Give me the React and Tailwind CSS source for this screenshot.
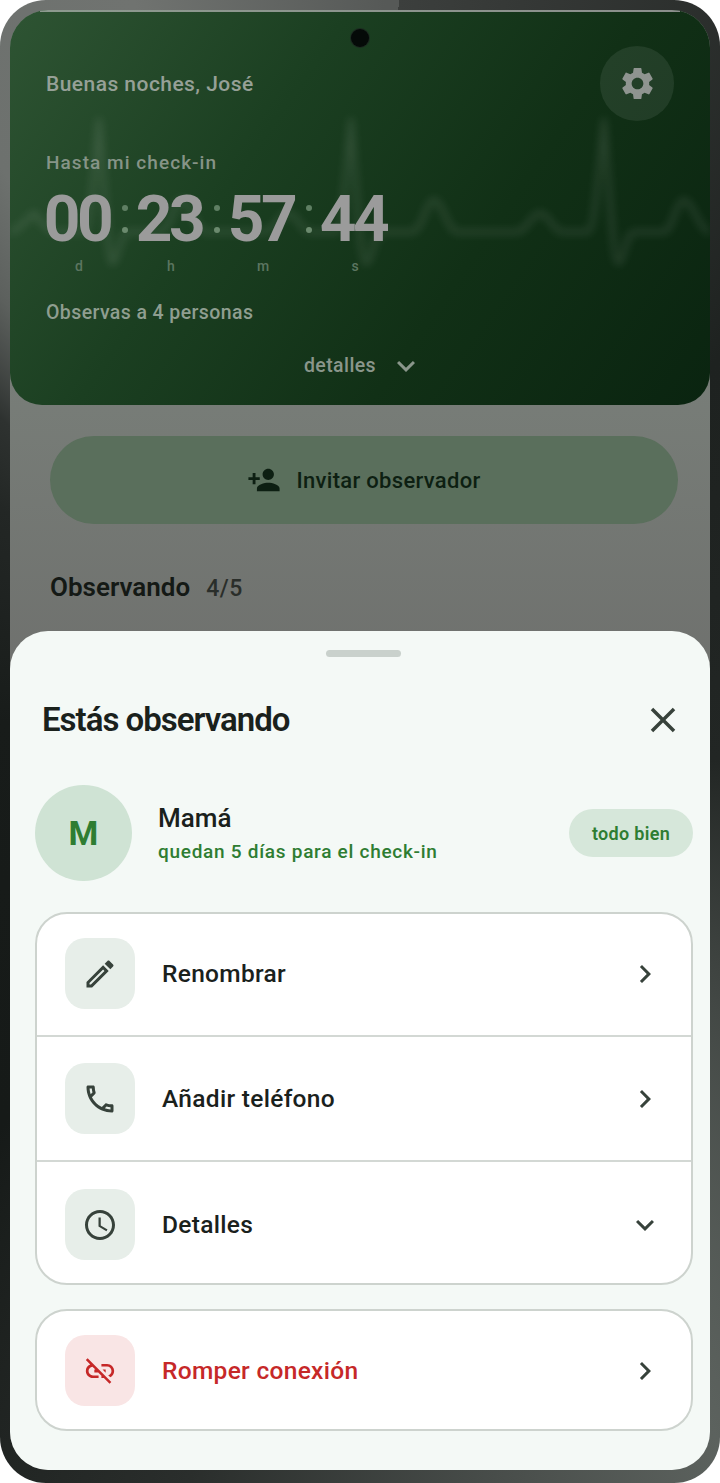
import React from "react";
import {
  MdSettings, MdPersonAdd, MdClose, MdOutlineEdit, MdOutlineCall, MdOutlineAccessTime,
  MdLinkOff, MdChevronRight, MdExpandMore,
} from "react-icons/md";

const ecg = "M10 232 C16 232 24 222 34 213 C42 222 48 232 56 232 L84 232 C90 232 94 170 99 120 C104 180 108 263 112 263 C118 263 120 232 128 232 L160 232 C170 232 174 200 182 200 C190 200 196 232 205 232 L265 232 C274 232 280 213 288 213 C296 213 302 232 310 232 L336 232 C342 232 346 170 351 120 C356 180 360 263 366 263 C372 263 374 232 382 232 L412 232 C422 232 426 200 434 200 C442 200 448 232 457 232 L517 232 C526 232 532 213 540 213 C548 213 554 232 562 232 L588 232 C594 232 599 170 604 120 C609 180 613 263 618 263 C624 263 626 232 634 232 L664 232 C672 232 676 200 684 200 C692 200 700 232 710 232";

function Unit({ value, label }) {
  return (
    <div className="flex w-[74px] flex-col items-center">
      <div className="pr-[4px] text-[64px] leading-[60px] font-bold tracking-[-3.5px] text-[#9b9b9b]">{value}</div>
      <div className="mt-[7px] text-[14px] leading-[18px] font-medium text-[#5c7560]">{label}</div>
    </div>
  );
}

function Dots() {
  return (
    <div className="flex h-[60px] w-[18px] flex-col items-center gap-[16px] pt-[15px]">
      <span className="h-[6px] w-[6px] rounded-full bg-[#5f7f63]" />
      <span className="h-[6px] w-[6px] rounded-full bg-[#6b8a6e]" />
    </div>
  );
}

function Row({ icon, label, end, tile = "bg-[#e7eee9] text-[#37423b]", text = "text-[#1a211c]", className = "" }) {
  return (
    <div className={`flex items-center pl-[28px] pr-[28px] ${className}`}>
      <div className={`flex h-[71px] w-[70px] shrink-0 items-center justify-center rounded-[20px] ${tile}`}>{icon}</div>
      <div className={`ml-[27px] flex-1 text-[24.5px] leading-[30px] font-medium tracking-[0.3px] ${text}`}>{label}</div>
      {end}
    </div>
  );
}

export default function App() {
  const chevron = <MdChevronRight className="text-[#37423b]" size={36} />;
  return (
    <div className="h-[1483px] w-[720px] bg-white font-['Roboto',sans-serif]">
      <div className="h-full w-full rounded-[46px] bg-[conic-gradient(from_3deg,#3c3f3d_0deg,#363937_8deg,#1e2220_40deg,#222624_90deg,#5c625e_150deg,#4a4f4c_165deg,#2a2e2c_190deg,#161a18_220deg,#181c1a_270deg,#232725_300deg,#2e3230_309deg,#5c605d_318deg,#6d716e_325deg,#707370_340deg,#565957_359deg)] px-[10px] pt-[10px] pb-[13px]">
        <div className="relative h-full w-full overflow-hidden rounded-[38px] bg-[linear-gradient(180deg,#838d85_0%,#6f716e_45%,#6b6e6b_100%)]">
          <div className="relative h-[395px] overflow-hidden rounded-b-[32px] bg-[linear-gradient(125deg,#2e5433_0%,#1b3f21_35%,#113016_65%,#0a2410_100%)] pt-[61px] pl-[36px]">
            <svg className="absolute top-[-10px] left-[-10px] blur-[4px]" width="720" height="395" viewBox="0 0 720 395">
              <path d={ecg} fill="none" stroke="#ffffff" strokeOpacity="0.11" strokeWidth="5" strokeLinejoin="round" />
            </svg>
            <div className="absolute top-[19px] left-[341px] h-[18px] w-[18px] rounded-full bg-[#050a08] ring-1 ring-[#1c2a20]" />
            <div className="absolute top-[36px] right-[36px] flex h-[75px] w-[74px] items-center justify-center rounded-full bg-[#ffffff14] text-[#8f9490]">
              <MdSettings size={39} />
            </div>
            <div className="relative text-[21px] leading-[26px] font-medium tracking-[0.45px] text-[#96a097]">Buenas noches, José</div>
            <div className="relative mt-[54px] text-[19px] leading-[24px] font-medium tracking-[1.05px] text-[#869487]">Hasta mi check-in</div>
            <div className="relative mt-[15px] -ml-[4px] flex">
              <Unit value="00" label="d" />
              <Dots />
              <Unit value="23" label="h" />
              <Dots />
              <Unit value="57" label="m" />
              <Dots />
              <Unit value="44" label="s" />
            </div>
            <div className="relative mt-[25px] text-[19.5px] leading-[26px] font-medium tracking-[0.4px] text-[#8f9e90]">Observas a 4 personas</div>
            <div className="relative mt-[27px] -ml-[36px] flex h-[26px] items-center justify-center gap-[12px] pl-[8px] text-[19.5px] leading-[26px] font-medium tracking-[0.4px] text-[#8a968b]">
              <span>detalles</span>
              <MdExpandMore size={36} />
            </div>
          </div>

          <div className="mt-[31px] mr-[32px] ml-[40px] flex h-[88px] items-center justify-center gap-[15px] rounded-full bg-[#5a6f5c] text-[22px] font-medium tracking-[0.3px] text-[#0d1f12]">
            <MdPersonAdd size={34} />
            <span>Invitar observador</span>
          </div>

          <div className="mt-[44px] ml-[40px] flex items-baseline gap-[16px]">
            <span className="text-[26px] font-semibold text-[#141915]">Observando</span>
            <span className="text-[23px] font-medium tracking-[0.5px] text-[#2a2e2a]">4/5</span>
          </div>

          <div className="absolute inset-x-0 bottom-0 h-[839px] rounded-t-[38px] bg-[#f4f9f6]">
            <div className="mt-[19px] ml-[316px] h-[7px] w-[75px] rounded-full bg-[#c9d1cc]" />
            <div className="mt-[41px] flex items-center justify-between pr-[26px] pl-[32px]">
              <h2 className="text-[33px] leading-[44px] font-semibold tracking-[-1px] text-[#1a211c]">Estás observando</h2>
              <MdClose className="text-[#37423b]" size={42} />
            </div>
            <div className="mt-[43px] flex items-center pr-[17px] pl-[25px]">
              <div className="flex h-[96px] w-[97px] shrink-0 items-center justify-center rounded-full bg-[#cfe3d4] text-[34px] font-bold text-[#2e7d32]">M</div>
              <div className="ml-[26px] flex-1">
                <div className="text-[26px] leading-[32px] font-medium text-[#1a211c]">Mamá</div>
                <div className="mt-[6px] text-[19px] leading-[24px] font-medium tracking-[0.72px] text-[#2e7d32]">quedan 5 días para el check-in</div>
              </div>
              <div className="flex h-[48px] w-[124px] items-center justify-center rounded-full bg-[#d6e7da] text-[18px] font-semibold tracking-[0.3px] text-[#2e7d32]">todo bien</div>
            </div>
            <div className="mt-[31px] mr-[17px] ml-[25px] overflow-hidden rounded-[32px] border-2 border-[#cdd3ce] bg-white">
              <Row className="h-[123px] border-b-2 border-[#d3d8d4] pb-[2px]" icon={<MdOutlineEdit size={36} />} label="Renombrar" end={chevron} />
              <Row className="h-[125px] border-b-2 border-[#d3d8d4]" icon={<MdOutlineCall size={36} />} label="Añadir teléfono" end={chevron} />
              <Row className="h-[121px] pt-[4px]" icon={<MdOutlineAccessTime size={36} />} label="Detalles" end={<MdExpandMore className="text-[#37423b]" size={36} />} />
            </div>
            <div className="mt-[24px] mr-[17px] ml-[25px] rounded-[32px] border-2 border-[#cdd3ce] bg-white">
              <Row className="h-[118px] pt-[1px]" tile="bg-[#f9e5e5] text-[#c62828]" text="text-[#c62828]" icon={<MdLinkOff size={34} />} label="Romper conexión" end={chevron} />
            </div>
          </div>
          <div className="absolute top-0 left-[30px] h-[2px] w-[640px] bg-[linear-gradient(90deg,#8d9a8f,#8b8f8c)]" />
        </div>
      </div>
    </div>
  );
}
